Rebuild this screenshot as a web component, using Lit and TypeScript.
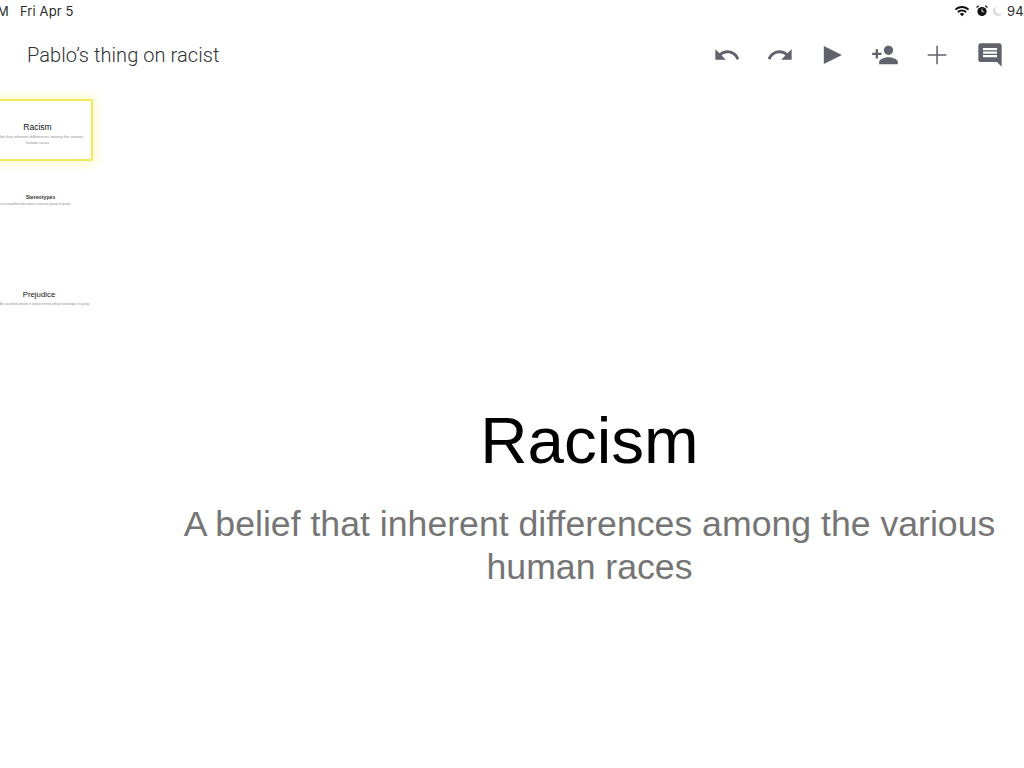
import { LitElement, html, css, svg } from "lit";
import { customElement } from "lit/decorators.js";

const ICONS = [
  svg`<path d="M12.5 8c-2.65 0-5.05.99-6.9 2.6L2 7v9h9l-3.62-3.62c1.39-1.16 3.16-1.88 5.12-1.88 3.54 0 6.55 2.31 7.6 5.5l2.37-.78C21.08 11.03 17.15 8 12.5 8z"/>`,
  svg`<path d="M18.4 10.6C16.55 8.99 14.15 8 11.5 8c-4.65 0-8.58 3.03-9.96 7.22L3.9 16c1.05-3.19 4.05-5.5 7.6-5.5 1.95 0 3.73.72 5.12 1.88L13 16h9V7l-3.6 3.6z"/>`,
  svg`<path d="M5 4.3v15.4L20.5 12z"/>`,
  svg`<path d="M15 12c2.21 0 4-1.79 4-4s-1.79-4-4-4-4 1.79-4 4 1.79 4 4 4zm-9-2V7H4v3H1v2h3v3h2v-3h3v-2H6zm9 4c-2.67 0-8 1.34-8 4v2h16v-2c0-2.66-5.33-4-8-4z"/>`,
  svg`<path d="M11.4 4h1.3v7.4H20v1.3h-7.3V20h-1.3v-7.3H4v-1.3h7.4z"/>`,
  svg`<path d="M21.99 4c0-1.1-.89-2-1.99-2H4c-1.1 0-2 .9-2 2v12c0 1.1.9 2 2 2h14l4 4-.01-18zM18 14H6v-2h12v2zm0-3H6V9h12v2zm0-3H6V6h12v2z"/>`,
];

const THUMBS = [
  { title: "Racism", sub: "A belief that inherent differences among the various human races", cls: "first" },
  { title: "Stereotypes", sub: "An oversimplified idea about a particular group of people", cls: "second" },
  { title: "Prejudice", sub: "An unjustified attitude or opinion formed without knowledge of a group", cls: "third" },
];

@customElement("app-root")
export class AppRoot extends LitElement {
  static styles = css`
    :host {
      display: flex;
      flex-direction: column;
      width: 1024px;
      height: 768px;
      overflow: hidden;
      background: #fff;
      font-family: "Liberation Sans", Arial, sans-serif;
    }
    .status {
      height: 22px;
      display: flex;
      align-items: center;
      justify-content: space-between;
      font: 13px/22px Inter, "Noto Sans", sans-serif;
      color: #2b2b2b;
      letter-spacing: 0.12px;
    }
    .left-status {
      display: flex;
      gap: 11px;
      margin-left: -3px;
    }
    .right-status {
      display: flex;
      align-items: center;
    }
    .wifi { margin-right: 6px; }
    .alarm { margin-right: 4px; }
    .moon { margin-right: 4px; }
    .battery { width: 17px; overflow: hidden; letter-spacing: 0.3px; }
    .toolbar {
      height: 66px;
      display: flex;
      align-items: center;
      justify-content: space-between;
      padding: 0 20px 0 27px;
    }
    .doc-title {
      font: 300 20px/28px Roboto, sans-serif;
      color: #2f3235;
      letter-spacing: 0.07px;
    }
    .actions { display: flex; gap: 24.6px; }
    .actions svg { width: 28px; height: 28px; fill: #62626c; display: block; }
    .body { flex: 1; display: flex; min-height: 0; }
    .rail {
      width: 93px;
      flex: none;
      display: flex;
      flex-direction: column;
      padding-top: 11px;
    }
    .thumb {
      box-sizing: border-box;
      width: 111px;
      height: 62px;
      margin-left: -18px;
      text-align: center;
      overflow: hidden;
      flex: none;
      background: #fff;
    }
    .thumb.first {
      border: 2px solid #f4ea5c;
      border-radius: 2px;
      box-shadow: 0 0 8px 4px #fdfbd2;
      padding-top: 21px;
      margin-bottom: 32px;
    }
    .thumb.second { height: 48px; margin-bottom: 48px; }
    .thumb-title { font-size: 8.5px; line-height: 11px; color: #111; }
    .second .thumb-title {
      font-size: 5.2px;
      line-height: 9px;
      font-weight: 700;
      color: #333;
      margin-left: 6px;
    }
    .third .thumb-title { font-size: 7.8px; margin-left: 3px; }
    .thumb-sub {
      font-size: 4px;
      line-height: 6px;
      color: #8f8f8f;
      margin: 1px auto 0;
      width: 100px;
    }
    .second .thumb-sub {
      font-size: 2.9px;
      line-height: 4px;
      margin: 0 0 0 16px;
      text-align: left;
      white-space: nowrap;
    }
    .third .thumb-sub {
      font-size: 2.9px;
      line-height: 4px;
      margin: 2px 0 0 18px;
      text-align: left;
      white-space: nowrap;
    }
    .slide {
      flex: 1;
      box-sizing: border-box;
      padding: 313px 0 0 62px;
      text-align: center;
    }
    .title { font-size: 65.5px; line-height: 80px; color: #000; }
    .subtitle {
      font-size: 35.65px;
      line-height: 43px;
      color: #757575;
      margin-top: 21.5px;
    }
  `;

  render() {
    return html`
      <div class="status">
        <div class="left-status"><span>M</span><span>Fri Apr 5</span></div>
        <div class="right-status">
          <svg class="wifi" width="16" height="12" viewBox="0 0 16 12">
            <path d="M8 1C5.2 1 2.7 2.1.8 3.9l1.3 1.4C3.6 3.8 5.7 2.9 8 2.9s4.4.9 5.9 2.4l1.3-1.4C13.3 2.1 10.8 1 8 1z" fill="#111"/>
            <path d="M8 4.6c-1.8 0-3.4.7-4.6 1.9l1.3 1.4C5.6 7 6.7 6.5 8 6.5s2.4.5 3.3 1.4l1.3-1.4C11.4 5.3 9.8 4.6 8 4.6z" fill="#111"/>
            <path d="M8 8.1c-.9 0-1.6.3-2.2.9L8 11.3 10.2 9c-.6-.6-1.3-.9-2.2-.9z" fill="#111"/>
          </svg>
          <svg class="alarm" width="12" height="12" viewBox="0 0 12 12">
            <circle cx="6" cy="6.5" r="4.6" fill="#111"/>
            <path d="M6 3.6v3.2h2.2" stroke="#fff" stroke-width=".8" fill="none"/>
            <path d="M.6 2.6 2.6.8M11.4 2.6 9.4.8" stroke="#111" stroke-width="1.3"/>
          </svg>
          <svg class="moon" width="11" height="12" viewBox="0 0 11 12">
            <path d="M4.5 1.2a5 5 0 1 0 5.8 7 4.6 4.6 0 0 1-5.8-7z" fill="#dedede"/>
          </svg>
          <span class="battery">94</span>
        </div>
      </div>
      <div class="toolbar">
        <div class="doc-title">Pablo’s thing on racist</div>
        <div class="actions">
          ${ICONS.map((p) => html`<svg viewBox="0 0 24 24">${p}</svg>`)}
        </div>
      </div>
      <div class="body">
        <div class="rail">
          ${THUMBS.map(
            (t) => html`<div class="thumb ${t.cls}">
              <div class="thumb-title">${t.title}</div>
              <div class="thumb-sub">${t.sub}</div>
            </div>`
          )}
        </div>
        <div class="slide">
          <div class="title">Racism</div>
          <div class="subtitle">A belief that inherent differences among the various human races</div>
        </div>
      </div>
    `;
  }
}
